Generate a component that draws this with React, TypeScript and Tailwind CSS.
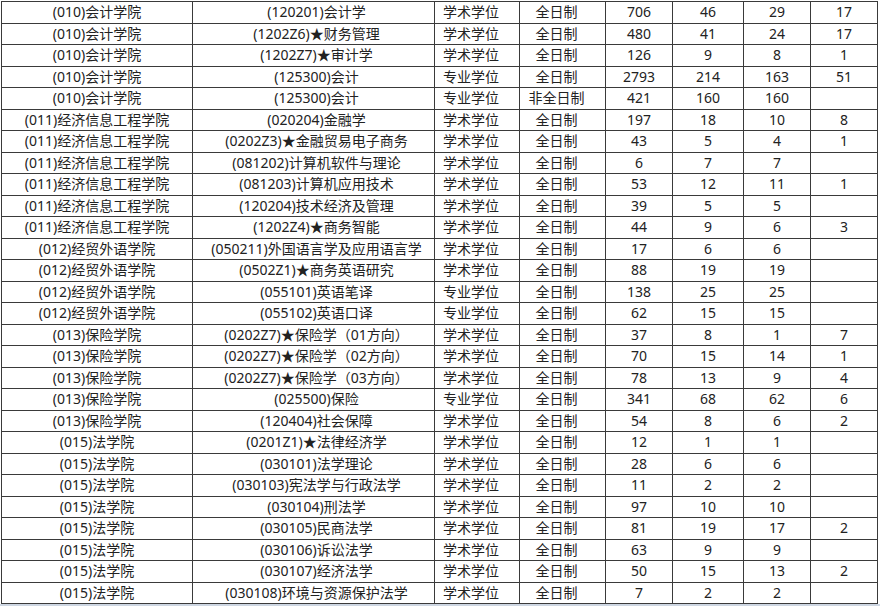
import React from "react";

const rows: string[][] = [
  ["(010)会计学院", "(120201)会计学", "学术学位", "全日制", "706", "46", "29", "17"],
  ["(010)会计学院", "(1202Z6)★财务管理", "学术学位", "全日制", "480", "41", "24", "17"],
  ["(010)会计学院", "(1202Z7)★审计学", "学术学位", "全日制", "126", "9", "8", "1"],
  ["(010)会计学院", "(125300)会计", "专业学位", "全日制", "2793", "214", "163", "51"],
  ["(010)会计学院", "(125300)会计", "专业学位", "非全日制", "421", "160", "160", ""],
  ["(011)经济信息工程学院", "(020204)金融学", "学术学位", "全日制", "197", "18", "10", "8"],
  ["(011)经济信息工程学院", "(0202Z3)★金融贸易电子商务", "学术学位", "全日制", "43", "5", "4", "1"],
  ["(011)经济信息工程学院", "(081202)计算机软件与理论", "学术学位", "全日制", "6", "7", "7", ""],
  ["(011)经济信息工程学院", "(081203)计算机应用技术", "学术学位", "全日制", "53", "12", "11", "1"],
  ["(011)经济信息工程学院", "(120204)技术经济及管理", "学术学位", "全日制", "39", "5", "5", ""],
  ["(011)经济信息工程学院", "(1202Z4)★商务智能", "学术学位", "全日制", "44", "9", "6", "3"],
  ["(012)经贸外语学院", "(050211)外国语言学及应用语言学", "学术学位", "全日制", "17", "6", "6", ""],
  ["(012)经贸外语学院", "(0502Z1)★商务英语研究", "学术学位", "全日制", "88", "19", "19", ""],
  ["(012)经贸外语学院", "(055101)英语笔译", "专业学位", "全日制", "138", "25", "25", ""],
  ["(012)经贸外语学院", "(055102)英语口译", "专业学位", "全日制", "62", "15", "15", ""],
  ["(013)保险学院", "(0202Z7)★保险学（01方向）", "学术学位", "全日制", "37", "8", "1", "7"],
  ["(013)保险学院", "(0202Z7)★保险学（02方向）", "学术学位", "全日制", "70", "15", "14", "1"],
  ["(013)保险学院", "(0202Z7)★保险学（03方向）", "学术学位", "全日制", "78", "13", "9", "4"],
  ["(013)保险学院", "(025500)保险", "专业学位", "全日制", "341", "68", "62", "6"],
  ["(013)保险学院", "(120404)社会保障", "学术学位", "全日制", "54", "8", "6", "2"],
  ["(015)法学院", "(0201Z1)★法律经济学", "学术学位", "全日制", "12", "1", "1", ""],
  ["(015)法学院", "(030101)法学理论", "学术学位", "全日制", "28", "6", "6", ""],
  ["(015)法学院", "(030103)宪法学与行政法学", "学术学位", "全日制", "11", "2", "2", ""],
  ["(015)法学院", "(030104)刑法学", "学术学位", "全日制", "97", "10", "10", ""],
  ["(015)法学院", "(030105)民商法学", "学术学位", "全日制", "81", "19", "17", "2"],
  ["(015)法学院", "(030106)诉讼法学", "学术学位", "全日制", "63", "9", "9", ""],
  ["(015)法学院", "(030107)经济法学", "学术学位", "全日制", "50", "15", "13", "2"],
  ["(015)法学院", "(030108)环境与资源保护法学", "学术学位", "全日制", "7", "2", "2", ""],
];

export default function App() {
  return (
    <div
      className="w-[880px] h-[606px] bg-white overflow-hidden flex flex-col text-[14px] text-[#222]"
      style={{ fontFamily: '"Noto Sans", "Noto Sans CJK SC", sans-serif' }}
    >
      <div className="ml-px mt-px w-[877px] grid grid-cols-[191px_242px_85px_86px_67px_71px_67px_67px] auto-rows-[21.5px] border-l border-t border-[#3a3a3a]">
        {rows.map((r, i) =>
          r.map((c, j) => (
            <div
              key={i + "-" + j}
              className={
                "border-r border-b border-[#3a3a3a] flex items-center justify-center whitespace-nowrap leading-none " +
                (j === 2 || j === 3 ? "pr-[12px]" : "") +
                (j === 1 ? " pl-[6px]" : "")
              }
            >
              {c}
            </div>
          ))
        )}
      </div>
      <div className="flex-1" />
      <div className="h-[3px] bg-[#cdd6e2]" />
    </div>
  );
}
